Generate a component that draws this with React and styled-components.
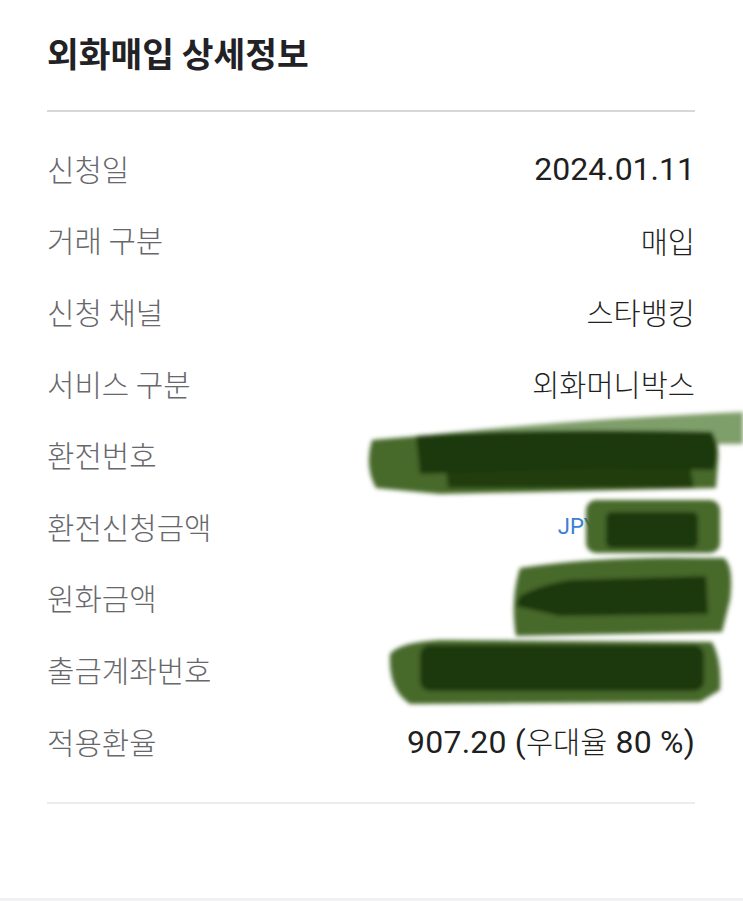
import React from "react";
import styled, { createGlobalStyle } from "styled-components";

const GlobalStyle = createGlobalStyle`
  html, body {
    margin: 0;
    padding: 0;
    background: #ffffff;
  }
  body {
    font-family: "Noto Sans CJK KR", "Noto Sans", sans-serif;
  }
`;

const Page = styled.div`
  position: relative;
  width: 743px;
  height: 901px;
  overflow: hidden;
  background: #ffffff;
  display: flex;
  flex-direction: column;
`;

const Section = styled.section`
  padding: 31px 48px 0 47px;
`;

const Title = styled.h1`
  margin: 0;
  font-family: "Noto Sans CJK KR", sans-serif;
  font-size: 34.5px;
  font-weight: 700;
  line-height: 42px;
  color: #222226;
`;

const Divider = styled.hr`
  margin: ${(p) => p.$top || 0}px 0 0;
  border: 0;
  height: 2px;
  background: ${(p) => p.$color || "#d6d6db"};
`;

const List = styled.dl`
  margin: 0;
  padding: 21px 0 25px;
  display: flex;
  flex-direction: column;
`;

const Row = styled.div`
  height: 71.6px;
  display: flex;
  align-items: center;
  justify-content: space-between;
`;

const Label = styled.dt`
  font-family: "Noto Sans CJK KR", sans-serif;
  font-size: 29.8px;
  font-weight: 300;
  color: #67676c;
  line-height: 1;
`;

const Value = styled.dd`
  margin: 0;
  font-family: "Noto Sans CJK KR", sans-serif;
  font-size: 29.5px;
  font-weight: 300;
  color: #1f1f22;
  line-height: 1;
  display: flex;
  align-items: baseline;
`;

const Num = styled.span`
  font-family: Roboto, "Noto Sans", sans-serif;
  font-size: 32px;
  font-weight: 400;
  letter-spacing: ${(p) => (p.$loose ? "0.2px" : "0")};
`;

const Currency = styled.span`
  font-family: Roboto, sans-serif;
  font-size: 22px;
  font-weight: 400;
  color: #3b7fd6;
`;

const Hidden = styled.span`
  display: inline-block;
  width: ${(p) => p.$w}px;
`;

const Footer = styled.div`
  margin-top: auto;
  height: 3px;
  background: #f1f1f3;
`;

const Marker = styled.svg`
  position: absolute;
  top: 0;
  left: 0;
  pointer-events: none;
`;

const rows = [
  { label: "신청일", value: <Num>2024.01.11</Num> },
  { label: "거래 구분", value: "매입" },
  { label: "신청 채널", value: "스타뱅킹" },
  { label: "서비스 구분", value: "외화머니박스" },
  { label: "환전번호", value: <Hidden $w={300} /> },
  {
    label: "환전신청금액",
    value: (
      <>
        <Currency>JPY</Currency>
        <Hidden $w={98} />
      </>
    ),
  },
  { label: "원화금액", value: <Hidden $w={170} /> },
  { label: "출금계좌번호", value: <Hidden $w={290} /> },
  {
    label: "적용환율",
    value: (
      <>
        <Num $loose>907.20 (</Num>
        <span>우대율</span>
        <Num $loose>&nbsp;80 %)</Num>
      </>
    ),
  },
];

const LIGHT = "#47692c";
const DARK = "#1d370b";

// marker strokes that hide the private numbers
const Scribbles = () => (
  <Marker width="743" height="901" viewBox="0 0 743 901">
    <defs>
      <filter id="soft" x="-5%" y="-20%" width="110%" height="140%">
        <feGaussianBlur stdDeviation="2.2" />
      </filter>
    </defs>
    <g filter="url(#soft)">
      <path d="M420 436 Q560 420 743 412 L743 444 Q600 444 420 448 Z" fill="#5f8646" opacity="0.8" />
      <path d="M372 440 L420 436 L712 436 Q720 440 718 462 L716 488 L440 494 L376 488 Q364 466 372 440 Z" fill={LIGHT} />
      <path d="M416 436 Q520 428 712 432 Q720 450 714 470 L600 468 L420 474 Z" fill={DARK} />
      <path d="M446 470 L690 466 L694 488 L448 488 Z" fill={DARK} opacity="0.9" />

      <rect x="586" y="500" width="134" height="53" rx="10" fill={LIGHT} />
      <rect x="606" y="512" width="92" height="36" rx="6" fill={DARK} />

      <path d="M520 568 Q600 556 700 558 L724 558 Q734 566 730 600 L722 632 L516 636 Q510 600 520 568 Z" fill={LIGHT} />
      <path d="M520 596 Q540 585 570 580 L706 576 L708 614 L560 616 L516 606 Z" fill={DARK} />

      <path d="M390 654 Q400 642 440 640 L712 642 Q722 660 720 690 L700 702 L410 704 Q388 690 390 654 Z" fill={LIGHT} />
      <rect x="420" y="645" width="284" height="46" rx="10" fill={DARK} />
    </g>
  </Marker>
);

const App = () => (
  <Page>
    <GlobalStyle />
    <Section>
      <Title>외화매입 상세정보</Title>
      <Divider $top={37} />
      <List>
        {rows.map((r) => (
          <Row key={r.label}>
            <Label>{r.label}</Label>
            <Value>{r.value}</Value>
          </Row>
        ))}
      </List>
      <Divider $color="#ececee" />
    </Section>
    <Footer />
    <Scribbles />
  </Page>
);

export default App;
